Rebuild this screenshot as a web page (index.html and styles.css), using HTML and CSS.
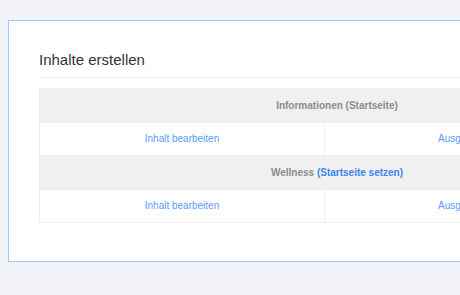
FILE: index.html
```html
<!DOCTYPE html>
<html lang="de">
<head>
    <meta charset="UTF-8">
    <title>Inhalte erstellen</title>
    <link rel="stylesheet" href="styles.css">
</head>
<body>
    <div class="card">
        <!-- Header -->
        <h2 class="card-title">Inhalte erstellen</h2>

        <!-- Pages table -->
        <table class="pages">
            <colgroup>
                <col class="col-first">
                <col>
            </colgroup>
            <tr class="page-row">
                <th colspan="2">Informationen (Startseite)</th>
            </tr>
            <tr>
                <td><a href="#">Inhalt bearbeiten</a></td>
                <td><a href="#">Ausgabe anzeigen</a></td>
            </tr>
            <tr class="page-row">
                <th colspan="2">Wellness <a href="#" class="set-home">(Startseite setzen)</a></th>
            </tr>
            <tr>
                <td><a href="#">Inhalt bearbeiten</a></td>
                <td><a href="#">Ausgabe anzeigen</a></td>
            </tr>
        </table>
    </div>
</body>
</html>
```

FILE: styles.css
```css
* {
    margin: 0;
    padding: 0;
    box-sizing: border-box;
}

body {
    font-family: 'Liberation Sans', Arial, sans-serif;
    background: #f2f3f8;
    padding: 20px 8px;
    overflow: hidden;
}

.card {
    width: 658px;
    background: white;
    border: 1px solid #9fc6fd;
    padding: 30px 30px 38px;
}

.card-title {
    font-size: 15px;
    font-weight: normal;
    line-height: 17px;
    color: #333;
    padding-bottom: 9px;
    border-bottom: 1px solid #f0f0f0;
    margin-bottom: 10px;
}

/* Table */
.pages {
    width: 596px;
    border-collapse: collapse;
    table-layout: fixed;
    font-size: 10px;
}

.col-first {
    width: 285px;
}

.pages th,
.pages td {
    height: 33px;
    text-align: center;
    border: 1px solid #eeeeee;
    line-height: 12px;
}

.pages th {
    height: 34px;
    background: #f0f0f0;
    color: #8c8c8c;
    font-weight: bold;
}

.pages a {
    color: #5a9bff;
    text-decoration: none;
}

.pages .set-home {
    color: #3a85f0;
}
```
